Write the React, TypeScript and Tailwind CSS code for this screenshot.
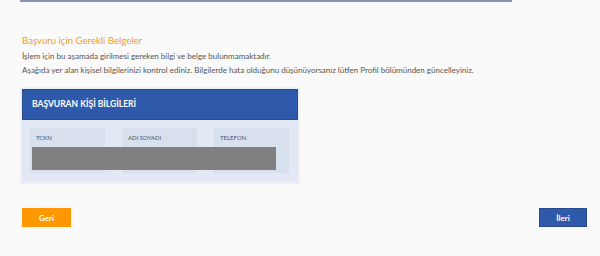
import React from "react";

export default function App() {
  const font = { fontFamily: 'Lato, "Noto Sans", sans-serif' };
  return (
    <div className="w-[600px] h-[256px] bg-[#fafafa] overflow-hidden flex flex-col" style={font}>
      <div className="ml-[20px] w-[492px] h-[2px] bg-[#8494b2]" />
      <div className="pl-[22px] pt-[32px] flex flex-col">
        <div className="text-[9.6px] leading-[13px] text-[#f39c1f]">Başvuru için Gerekli Belgeler</div>
        <div className="mt-[2px] text-[8px] leading-[14px] text-[#555]">
          İşlem için bu aşamada girilmesi gereken bilgi ve belge bulunmamaktadır.
        </div>
        <div className="text-[8px] leading-[14px] text-[#555]">
          Aşağıda yer alan kişisel bilgilerinizi kontrol ediniz. Bilgilerde hata olduğunu düşünüyorsanız lütfen Profil bölümünden güncelleyiniz.
        </div>
      </div>
      <div className="ml-[20px] mt-[10px] w-[280px] p-[2px] bg-[#edf1f7]">
        <div className="h-[31px] bg-[#2f5aab] border border-[#26488c] flex items-center pl-[9px] text-white font-bold text-[8.5px]">
          BAŞVURAN KİŞİ BİLGİLERİ
        </div>
        <div className="relative bg-[#e2e8f4] h-[62px] pt-[8px] px-[8px] flex gap-[17px]">
          {["TCKN", "ADI SOYADI", "TELEFON"].map((l) => (
            <div key={l} className="w-[75px] h-[45px] bg-[#d8e0ee] pl-[6px] pt-[5px] text-[6px] text-[#4a5568]">
              {l}
            </div>
          ))}
          <div className="absolute left-[10px] top-[27px] w-[244px] h-[23px] bg-[#808080]" />
        </div>
      </div>
      <div className="mt-[24px] px-[22px] flex justify-between">
        <button className="w-[49px] h-[19px] bg-[#ff9800] text-white font-bold text-[8px] flex items-center justify-center">
          Geri
        </button>
        <button className="mr-[-9px] w-[48px] h-[19px] bg-[#2f5aab] border border-[#26488c] text-white font-bold text-[8px] flex items-center justify-center">
          İleri
        </button>
      </div>
    </div>
  );
}
